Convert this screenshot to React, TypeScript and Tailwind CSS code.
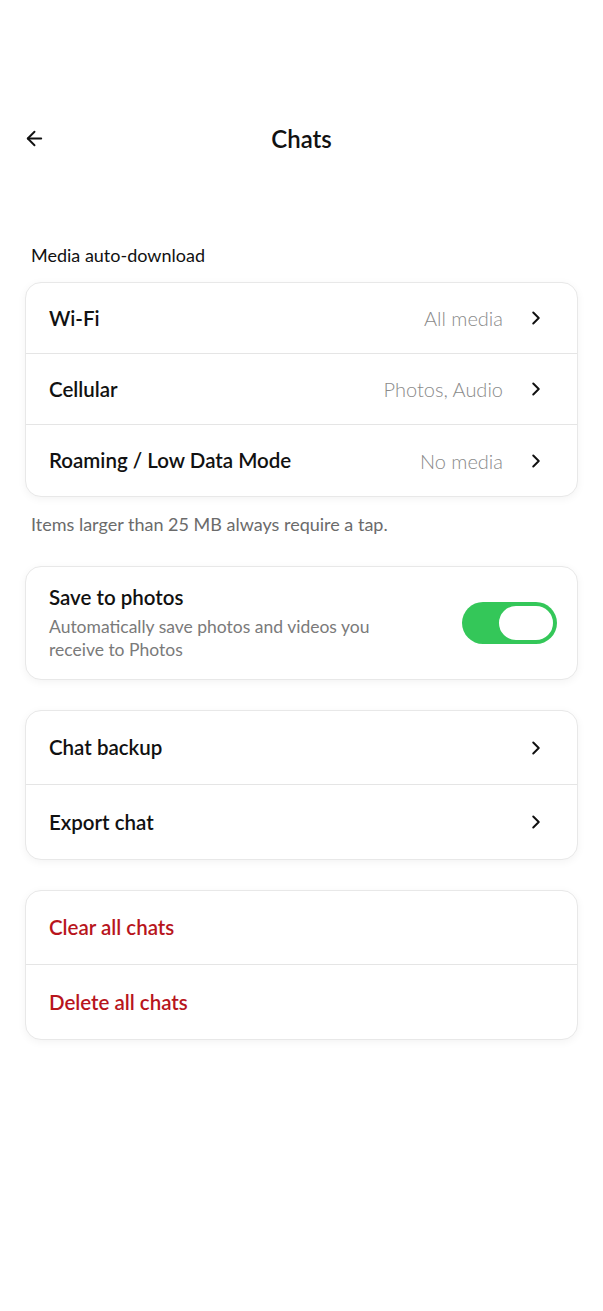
import { ArrowLeft, ChevronRight } from "lucide-react";

const font = { fontFamily: "Lato, 'Noto Sans', sans-serif" };

function NavRow({ label, value, last }: { label: string; value?: string; last?: boolean }) {
  return (
    <div
      className={`flex items-center justify-between pl-[23px] pr-[30px] h-[71px] ${
        last ? "" : "border-b border-[#e5e5e5]"
      }`}
    >
      <span className="text-[20.5px] font-semibold text-[#111]">{label}</span>
      <div className="flex items-center gap-[22px]">
        {value && <span className="text-[20px] font-light text-[#8a8a8a]">{value}</span>}
        <ChevronRight className="w-[22px] h-[22px] text-[#111]" strokeWidth={2.2} />
      </div>
    </div>
  );
}

function ActionRow({ label, danger, chevron, last }: { label: string; danger?: boolean; chevron?: boolean; last?: boolean }) {
  return (
    <div
      className={`flex items-center justify-between pl-[23px] pr-[30px] h-[74px] ${
        last ? "" : "border-b border-[#e5e5e5]"
      }`}
    >
      <span className={`text-[20.5px] font-semibold ${danger ? "text-[#b8151c]" : "text-[#111]"}`}>{label}</span>
      {chevron && <ChevronRight className="w-[22px] h-[22px] text-[#111]" strokeWidth={2.2} />}
    </div>
  );
}

const card = "mx-[25px] bg-white rounded-[16px] border border-[#e8e8e8] shadow-[0_2px_8px_rgba(0,0,0,0.05)] overflow-hidden";

export default function App() {
  return (
    <div className="min-h-[1311px] w-[603px] bg-white" style={font}>
      {/* Header */}
      <div className="relative flex items-center justify-center pt-[125px] h-[153px]">
        <ArrowLeft className="absolute left-[23px] top-[127px] w-[23px] h-[23px] text-[#111]" strokeWidth={2} />
        <h1 className="text-[24px] font-semibold text-[#111] leading-none">Chats</h1>
      </div>

      <p className="mt-[93px] ml-[31px] text-[18px] text-[#111] leading-none">Media auto-download</p>

      <div className={`${card} mt-[18px]`}>
        <NavRow label="Wi-Fi" value="All media" />
        <NavRow label="Cellular" value="Photos, Audio" />
        <NavRow label="Roaming / Low Data Mode" value="No media" last />
      </div>

      <p className="mt-[18px] ml-[31px] text-[18px] text-[#6b6b6b] leading-none">
        Items larger than 25 MB always require a tap.
      </p>

      {/* Save to photos */}
      <div className={`${card} mt-[33px] flex items-center justify-between pl-[23px] pr-[20px] h-[114px]`}>
        <div className="w-[345px]">
          <p className="text-[20.5px] font-semibold text-[#111] leading-tight">Save to photos</p>
          <p className="mt-[5px] text-[17.5px] text-[#7a7a7a] leading-[23px]">
            Automatically save photos and videos you receive to Photos
          </p>
        </div>
        <div className="w-[95px] h-[42px] rounded-full bg-[#34c759] flex items-center justify-end p-[2px]">
          <div className="w-[58px] h-[38px] rounded-full bg-white border-2 border-[#34c759]" />
        </div>
      </div>

      <div className={`${card} mt-[30px]`}>
        <ActionRow label="Chat backup" chevron />
        <ActionRow label="Export chat" chevron last />
      </div>

      <div className={`${card} mt-[30px]`}>
        <ActionRow label="Clear all chats" danger />
        <ActionRow label="Delete all chats" danger last />
      </div>
    </div>
  );
}
